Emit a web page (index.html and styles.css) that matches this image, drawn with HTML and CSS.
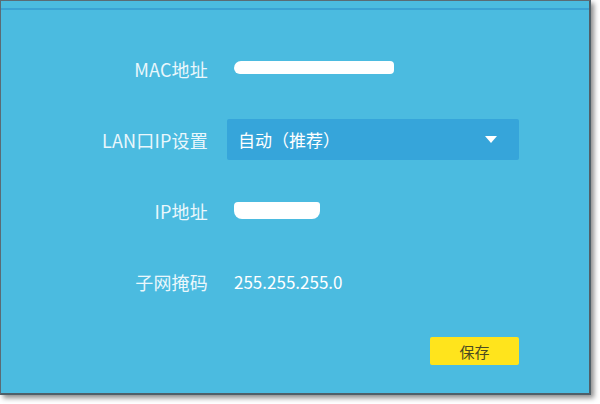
FILE: index.html
```html
<!DOCTYPE html>
<html lang="zh-CN">
<head>
  <meta charset="UTF-8">
  <meta name="viewport" content="width=device-width, initial-scale=1">
  <title>LAN口设置</title>
  <link rel="stylesheet" href="styles.css">
</head>
<body>
  <div class="panel">
    <div class="topbar"></div>

    <form class="lan-form">
      <label class="label">MAC地址</label>
      <div class="value"><span class="redact redact-mac" title="已隐藏"></span></div>

      <label class="label">LAN口IP设置</label>
      <div class="select">
        <span>自动（推荐）</span>
        <svg class="arrow" width="12" height="7" viewBox="0 0 12 7">
          <path d="M0 0 H12 L6 7 Z" fill="#fff"/>
        </svg>
      </div>

      <label class="label">IP地址</label>
      <div class="value"><span class="redact redact-ip" title="已隐藏"></span></div>

      <label class="label">子网掩码</label>
      <div class="value">255.255.255.0</div>

      <div class="actions">
        <button type="button" class="save-btn">保存</button>
      </div>
    </form>
  </div>
</body>
</html>
```

FILE: styles.css
```css
* {
  margin: 0;
  padding: 0;
  box-sizing: border-box;
}
body {
  background: #ffffff;
  font-family: 'Noto Sans CJK SC', 'Noto Sans', sans-serif;
  width: 600px;
  height: 404px;
  overflow: hidden;
}
.panel {
  width: 591px;
  height: 395px;
  background: #4bbbe0;
  border-left: 1px solid #5a6b75;
  border-top: 1px solid #5a6b75;
  border-right: 2px solid #4f5f68;
  border-bottom: 2px solid #4f5f68;
  box-shadow: 3px 3px 5px rgba(0, 0, 0, 0.45);
}
.topbar {
  height: 9px;
  border-bottom: 2px solid #3aa3d4;
}
.lan-form {
  display: grid;
  grid-template-columns: 207px 292px;
  grid-auto-rows: 41px;
  column-gap: 19px;
  row-gap: 30px;
  margin-top: 38px;
}
.label {
  align-self: center;
  text-align: right;
  color: #eaf7fc;
  font-size: 18px;
  letter-spacing: 0.2px;
}
.value {
  align-self: center;
  padding-left: 7px;
  color: #ffffff;
  font-size: 17px;
  display: flex;
  align-items: center;
}
.redact {
  display: inline-block;
  background: #ffffff;
}
.redact-mac {
  width: 160px;
  height: 13px;
  margin-top: -2px;
  border-radius: 7px 4px 4px 6px;
}
.redact-ip {
  width: 86px;
  height: 17px;
  border-radius: 4px 3px 8px 8px;
}
.select {
  background: #36a5da;
  border-radius: 2px;
  display: flex;
  align-items: center;
  justify-content: space-between;
  padding: 0 22px 0 11px;
  color: #ffffff;
  font-size: 17px;
}
.arrow {
  display: block;
}
.actions {
  grid-column: 2;
  display: flex;
  justify-content: flex-end;
  align-items: flex-start;
  margin-top: 5px;
}
.save-btn {
  width: 89px;
  height: 28px;
  background: #ffe41c;
  border: none;
  border-radius: 2px;
  color: #4a4a22;
  font-family: inherit;
  font-size: 15px;
  cursor: pointer;
}
```
